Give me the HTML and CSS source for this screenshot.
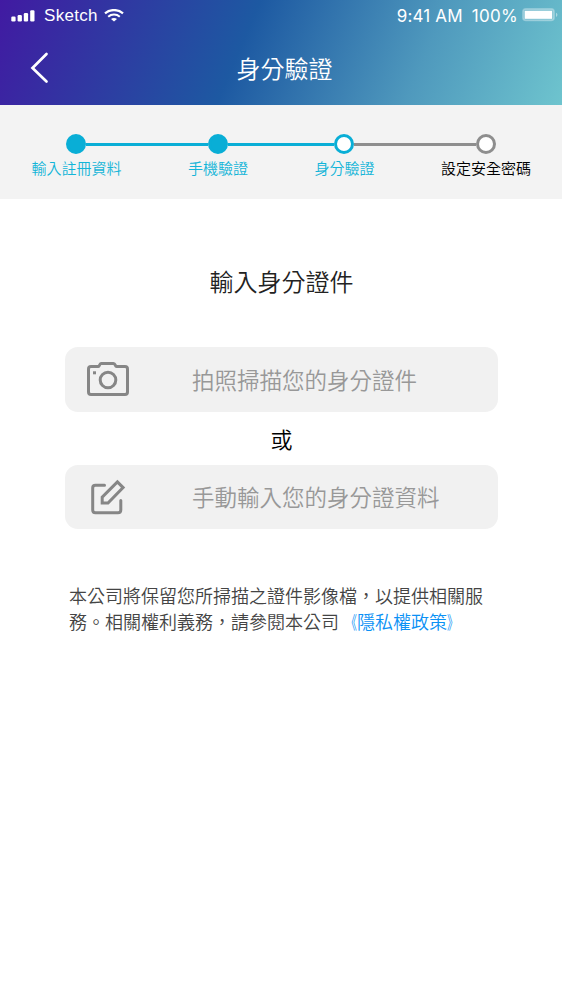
FILE: index.html
```html
<!DOCTYPE html>
<html lang="zh-Hant">
<head>
  <meta charset="UTF-8" />
  <meta name="viewport" content="width=device-width, initial-scale=1.0"/>
  <title>身分驗證</title>
  <link rel="stylesheet" href="styles.css">
</head>
<body>

  <header class="header">
    <div class="status-bar">
      <svg class="signal" width="24" height="12" viewBox="0 0 24 12" fill="#fff">
        <rect x="0.3" y="6.5" width="4.3" height="5" rx="1.2"/>
        <rect x="6.6" y="5" width="4.3" height="6.5" rx="1.2"/>
        <rect x="12.8" y="3" width="4.3" height="8.5" rx="1.2"/>
        <rect x="19.2" y="0.3" width="4.3" height="11.2" rx="1.2"/>
      </svg>
      <span class="carrier">Sketch</span>
      <svg class="wifi" width="20" height="13" viewBox="0 0 20 13">
        <path d="M1 4.4C6 -0.1 14 -0.1 19 4.4" fill="none" stroke="#fff" stroke-width="2.2"/>
        <path d="M4.2 7.7C7.5 4.8 12.5 4.8 15.8 7.7" fill="none" stroke="#fff" stroke-width="2.1"/>
        <path d="M7 10.1C8.7 8.7 11.3 8.7 13 10.1L10 12.6Z" fill="#fff"/>
      </svg>
      <span class="time">9:41 AM</span>
      <span class="percent">100%</span>
      <svg class="battery" width="36" height="14" viewBox="0 0 36 14">
        <rect x="0.9" y="0.9" width="31.2" height="11.6" rx="3" fill="#fff" fill-opacity="0.2" stroke="#fff" stroke-opacity="0.3" stroke-width="1.6"/>
        <rect x="2.7" y="2.8" width="27.4" height="8" fill="#fff"/>
        <path d="M34 4.8C35.9 5.4 35.9 8.3 34 8.9Z" fill="#fff" fill-opacity="0.45"/>
      </svg>
    </div>
    <div class="nav-bar">
      <svg class="back" width="20" height="32" viewBox="0 0 20 32">
        <path d="M16.5 2L2.5 16L16.5 29.5" fill="none" stroke="#fff" stroke-width="2.7" stroke-linecap="round"/>
      </svg>
      <h1>身分驗證</h1>
    </div>
  </header>

  <div class="steps">
    <div class="track">
      <span class="dot done"></span>
      <span class="line line-long"></span>
      <span class="dot done"></span>
      <span class="line line-short"></span>
      <span class="dot current"></span>
      <span class="line line-long todo"></span>
      <span class="dot todo"></span>
    </div>
    <div class="labels">
      <span>輸入註冊資料</span>
      <span>手機驗證</span>
      <span>身分驗證</span>
      <span class="todo">設定安全密碼</span>
    </div>
  </div>

  <main class="content">
    <h2>輸入身分證件</h2>

    <button class="option">
      <svg width="44" height="36" viewBox="0 0 44 36" fill="none" stroke="#868686" stroke-width="3" stroke-linejoin="round">
        <path d="M5 5.5H12.5C13.5 5.5 13.5 2.5 15 2.5H27.5C29.5 2.5 29 5.5 30.5 5.5H39C40.4 5.5 41.5 6.6 41.5 8V31C41.5 32.4 40.4 33.5 39 33.5H5C3.6 33.5 2.5 32.4 2.5 31V8C2.5 6.6 3.6 5.5 5 5.5Z"/>
        <circle cx="22" cy="19" r="7.8"/>
        <rect x="7" y="10.3" width="3" height="3" fill="#868686" stroke="none"/>
      </svg>
      <span>拍照掃描您的身分證件</span>
    </button>

    <p class="or">或</p>

    <button class="option">
      <svg width="44" height="36" viewBox="0 0 44 36" fill="none" stroke="#868686" stroke-width="3">
        <path d="M18.5 6.3H9.5C7.8 6.3 6.7 7.4 6.7 9V31C6.7 32.6 7.8 33.7 9.5 33.7H32C33.7 33.7 34.8 32.6 34.8 31V21.5" stroke-linecap="round"/>
        <path d="M31.4 2.9L37.1 8.6L22 24.1H16.2V18.1Z"/>
      </svg>
      <span>手動輸入您的身分證資料</span>
    </button>

    <p class="notice">本公司將保留您所掃描之證件影像檔，以提供相關服務。相關權利義務，請參閱本公司<a href="#"><span class="bracket open">《</span>隱私權政策<span class="bracket close">》</span></a></p>
  </main>

</body>
</html>
```
FILE: styles.css
```css
body {
  margin: 0;
  font-family: 'Noto Sans CJK TC', sans-serif;
  font-weight: 350;
  background-color: #fff;
  color: #000;
}

.header {
  height: 105px;
  color: white;
  background: linear-gradient(113deg, #411aa2 0%, #1d59a2 43%, #4f99bd 74%, #6ec4ce 100%);
}

.status-bar {
  display: flex;
  align-items: center;
  height: 32px;
  padding: 0 4px 0 11px;
  font-family: Inter, 'Liberation Sans', sans-serif;
  font-size: 17px;
  font-weight: 400;
}

.carrier {
  margin-left: 9px;
  font-family: 'Liberation Sans', sans-serif;
  letter-spacing: 0.3px;
}

.wifi {
  margin: 0 0 1px 6px;
}

.time {
  margin-left: auto;
  letter-spacing: 0.15px;
}

.percent {
  margin-left: 9px;
  letter-spacing: 0.3px;
}

.battery {
  margin: 0 0 2px 4px;
}

.nav-bar {
  display: grid;
  grid-template-columns: 60px 1fr 60px;
  align-items: center;
  height: 72px;
}

.back {
  margin-left: 30px;
}

.nav-bar h1 {
  margin: 0;
  padding-left: 7px;
  font-size: 24px;
  line-height: 36px;
  font-weight: 350;
  text-align: center;
}

/* Progress steps */
.steps {
  height: 65px;
  padding: 29px 31px 0;
  background: #f3f3f3;
}

.track {
  display: flex;
  align-items: center;
  padding: 0 35px;
}

.dot {
  box-sizing: border-box;
  width: 20px;
  height: 20px;
  border: 3px solid #09aed6;
  border-radius: 50%;
  background: #fff;
}

.dot.done {
  background: #09aed6;
}

.dot.todo {
  border-color: #8e8e8e;
}

.line {
  height: 3px;
  background: #09aed6;
}

.line-long {
  flex: 122;
}

.line-short {
  flex: 106;
}

.line.todo {
  background: #8e8e8e;
}

.labels {
  display: flex;
  justify-content: space-between;
  margin: 3px 0 0 0.5px;
  font-size: 15px;
  line-height: 22px;
  color: #13b5d8;
}

.labels .todo {
  color: #000;
}

.content {
  padding: 0 64px 0 65px;
}

.content h2 {
  margin: 64px 0 48px;
  font-size: 24px;
  line-height: 36px;
  font-weight: 350;
  text-align: center;
  color: #222;
}

.option {
  display: flex;
  align-items: center;
  width: 100%;
  height: 64.5px;
  padding: 0 21px;
  border: none;
  border-radius: 13px;
  background: #f1f1f1;
  color: #989898;
  font: inherit;
  font-size: 22.5px;
  line-height: 32px;
  cursor: pointer;
}

.option span {
  margin: -1px 0 0 62px;
}

.or {
  margin: 0;
  font-size: 22px;
  line-height: 53px;
  text-align: center;
}

.notice {
  margin: 53px 0 0;
  padding: 0 10px 0 4px;
  font-size: 18px;
  line-height: 26px;
  color: #444;
}

.notice a {
  color: #0b91f5;
  text-decoration: none;
}

/* narrower title marks */
.bracket {
  display: inline-block;
}

.bracket.open {
  transform: scaleX(0.62);
  transform-origin: right;
}

.bracket.close {
  transform: scaleX(0.62);
  transform-origin: left;
}
```
